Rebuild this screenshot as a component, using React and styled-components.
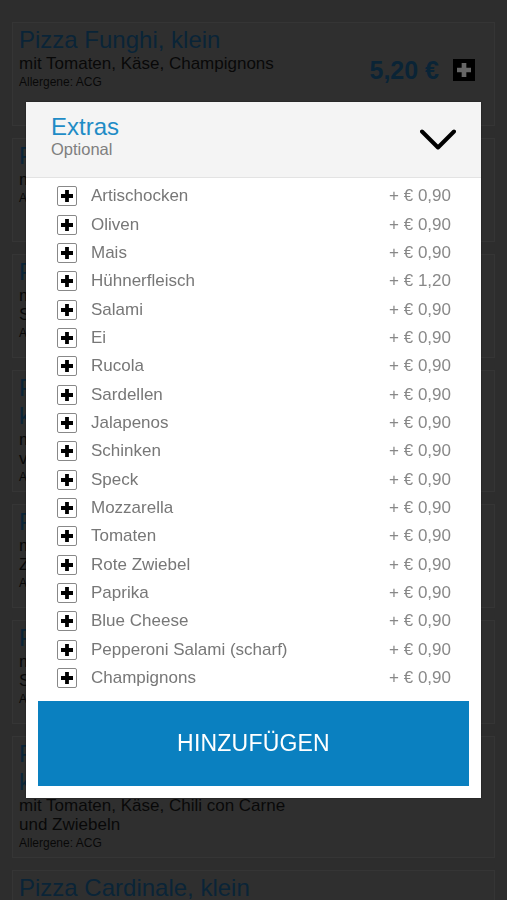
import React from "react";
import styled, { createGlobalStyle } from "styled-components";

const GlobalStyle = createGlobalStyle`
  html, body {
    margin: 0;
    padding: 0;
  }
  body {
    background: #727272;
    font-family: "Liberation Sans", Arial, Helvetica, sans-serif;
  }
`;

const Page = styled.div`
  display: flex;
  flex-direction: column;
  gap: 12px;
  padding: 22px 12px 40px;
`;

const Card = styled.div`
  box-sizing: border-box;
  min-height: 104px;
  display: flex;
  justify-content: space-between;
  padding: 3px 19px 7px 6px;
  background: #767676;
  border: 1px solid #868686;
`;

const Info = styled.div`
  display: flex;
  flex-direction: column;
  max-width: 300px;
`;

const DishTitle = styled.div`
  font-size: 24px;
  line-height: 28px;
  color: #1a5b8a;
  white-space: pre-line;
`;

const DishDesc = styled.div`
  font-size: 17px;
  line-height: 19px;
  color: #161616;
  white-space: pre-line;
`;

const Allergens = styled.div`
  margin-top: 2px;
  font-size: 12px;
  line-height: 14px;
  color: #161616;
`;

const PriceBox = styled.div`
  display: flex;
  align-items: center;
  gap: 14px;
  margin-top: 33px;
  height: 22px;
`;

const DishPrice = styled.span`
  font-size: 25px;
  font-weight: bold;
  color: #1a5a88;
`;

const AddSquare = styled.span`
  width: 22px;
  height: 22px;
  background: #000;
  display: flex;
  align-items: center;
  justify-content: center;
`;

const Overlay = styled.div`
  position: fixed;
  inset: 0;
  background: rgba(0, 0, 0, 0.6);
  display: flex;
  justify-content: center;
  align-items: flex-start;
  padding-top: 102px;
`;

const Modal = styled.div`
  width: 455px;
  background: #fff;
  box-shadow: 0 0 2px rgba(0, 0, 0, 0.5);
  display: flex;
  flex-direction: column;
`;

const Header = styled.div`
  box-sizing: border-box;
  height: 76px;
  display: flex;
  justify-content: space-between;
  align-items: center;
  padding: 0 25px;
  background: #f4f4f4;
  border-bottom: 1px solid #e3e3e3;
`;

const HeaderText = styled.div`
  align-self: flex-start;
  padding-top: 12px;
  display: flex;
  flex-direction: column;
`;

const HeaderTitle = styled.span`
  font-size: 24px;
  line-height: 25px;
  color: #1f8cc6;
`;

const HeaderSub = styled.span`
  font-size: 16.5px;
  line-height: 20px;
  color: #7f7f7f;
`;

const ExtraList = styled.div`
  padding-top: 4px;
  display: flex;
  flex-direction: column;
`;

const ExtraRow = styled.div`
  height: 28.35px;
  display: flex;
  align-items: center;
  gap: 14px;
  padding: 0 30px 0 31px;
`;

const CheckBox = styled.span`
  box-sizing: border-box;
  width: 20px;
  height: 20px;
  border: 1.5px solid #888;
  border-radius: 2px;
  display: flex;
  align-items: center;
  justify-content: center;
`;

const ExtraName = styled.span`
  flex: 1;
  font-size: 17px;
  color: #777;
`;

const ExtraPrice = styled.span`
  font-size: 17px;
  color: #888;
`;

const Footer = styled.div`
  padding: 9px 12px 12px;
`;

const AddButton = styled.button`
  width: 100%;
  height: 85px;
  border: 0;
  background: #0a80c0;
  color: #fff;
  font-family: inherit;
  font-size: 23px;
  letter-spacing: 0.2px;
`;

const Plus = ({ size, stroke, color }) => (
  <svg width={size} height={size} viewBox="0 0 12 12">
    <path d="M6 0v12M0 6h12" stroke={color} strokeWidth={stroke} />
  </svg>
);

const Chevron = () => (
  <svg width="36" height="22" viewBox="0 0 36 22">
    <polyline
      points="2,2.5 18,18.5 34,2.5"
      fill="none"
      stroke="#000"
      strokeWidth="4"
      strokeLinecap="round"
      strokeLinejoin="round"
    />
  </svg>
);

const dishes = [
  { title: "Pizza Funghi, klein", desc: "mit Tomaten, Käse, Champignons", price: "5,20 €" },
  { title: "Pizza Prosciutto, klein", desc: "mit Tomaten, Käse, Schinken", price: "5,50 €" },
  { title: "Pizza Salami, klein", desc: "mit Tomaten, Käse, Paprika und\nSalami", price: "5,50 €" },
  { title: "Pizza Hawaii Spezial,\nklein", desc: "mit Tomaten, Käse, Schinken, Ananas\nverschiedenem Gemüse", price: "6,20 €" },
  { title: "Pizza Tonno, klein", desc: "mit Tomaten, Käse, Thunfisch und\nZwiebeln", price: "5,80 €" },
  { title: "Pizza Diavolo, klein", desc: "mit Tomaten, Käse, Peperoni und\nSalami (scharf)", price: "5,80 €" },
  { title: "Pizza Chili con Carne,\nklein", desc: "mit Tomaten, Käse, Chili con Carne\nund Zwiebeln", price: "6,20 €" },
  { title: "Pizza Cardinale, klein", desc: "mit Tomaten, Käse, Schinken", price: "5,50 €" },
];

const extras = [
  ["Artischocken", "0,90"],
  ["Oliven", "0,90"],
  ["Mais", "0,90"],
  ["Hühnerfleisch", "1,20"],
  ["Salami", "0,90"],
  ["Ei", "0,90"],
  ["Rucola", "0,90"],
  ["Sardellen", "0,90"],
  ["Jalapenos", "0,90"],
  ["Schinken", "0,90"],
  ["Speck", "0,90"],
  ["Mozzarella", "0,90"],
  ["Tomaten", "0,90"],
  ["Rote Zwiebel", "0,90"],
  ["Paprika", "0,90"],
  ["Blue Cheese", "0,90"],
  ["Pepperoni Salami (scharf)", "0,90"],
  ["Champignons", "0,90"],
];

export default function App() {
  return (
    <>
      <GlobalStyle />
      <Page>
        {dishes.map((d) => (
          <Card key={d.title}>
            <Info>
              <DishTitle>{d.title}</DishTitle>
              <DishDesc>{d.desc}</DishDesc>
              <Allergens>Allergene: ACG</Allergens>
            </Info>
            <PriceBox>
              <DishPrice>{d.price}</DishPrice>
              <AddSquare>
                <Plus size={14} stroke={4} color="#fff" />
              </AddSquare>
            </PriceBox>
          </Card>
        ))}
      </Page>
      <Overlay>
        <Modal>
          <Header>
            <HeaderText>
              <HeaderTitle>Extras</HeaderTitle>
              <HeaderSub>Optional</HeaderSub>
            </HeaderText>
            <Chevron />
          </Header>
          <ExtraList>
            {extras.map(([name, price]) => (
              <ExtraRow key={name}>
                <CheckBox>
                  <Plus size={12} stroke={3.8} color="#000" />
                </CheckBox>
                <ExtraName>{name}</ExtraName>
                <ExtraPrice>+ € {price}</ExtraPrice>
              </ExtraRow>
            ))}
          </ExtraList>
          <Footer>
            <AddButton>HINZUFÜGEN</AddButton>
          </Footer>
        </Modal>
      </Overlay>
    </>
  );
}
